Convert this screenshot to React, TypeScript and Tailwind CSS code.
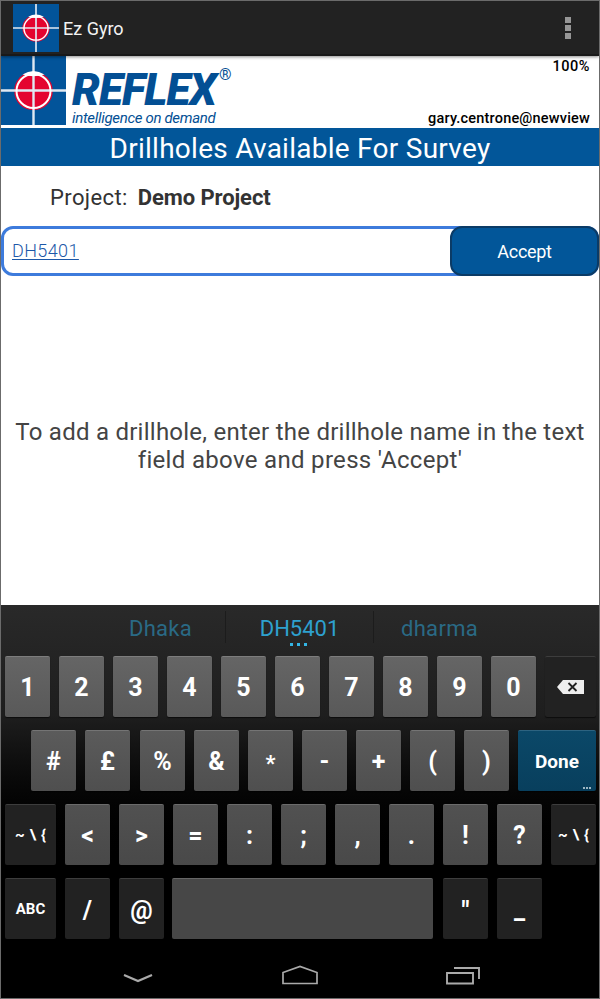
import React from "react";

const faces: Record<string, string> = {
  row1: "bg-linear-to-b from-[#656565] to-[#595959] border-t-[#7d7d7d]",
  row2: "bg-linear-to-b from-[#5b5b5b] to-[#4f4f4f] border-t-[#747474]",
  row3: "bg-linear-to-b from-[#515151] to-[#494949] border-t-[#6b6b6b]",
  space: "bg-[#474747] border-t-[#666666]",
  dark: "bg-[#222222] border-t-[#3d3d3d]",
  done: "bg-linear-to-b from-[#0b4868] to-[#083f5d] border-t-[#2d6380]",
};

function Key({
  face,
  size = "w-[45px]",
  text = "text-[25px]",
  children,
}: {
  face: string;
  size?: string;
  text?: string;
  children?: React.ReactNode;
}) {
  return (
    <div
      className={`relative flex h-[61px] shrink-0 items-center justify-center rounded-[2px] border-t font-bold leading-none text-white shadow-[0_1px_1px_rgba(0,0,0,0.6)] ${faces[face]} ${size} ${text}`}
    >
      {children}
    </div>
  );
}

function Target({ className }: { className: string }) {
  return (
    <svg className={className} viewBox="0 0 65 69" preserveAspectRatio="none">
      <rect width="65" height="69" fill="#02549a" />
      <circle cx="32.5" cy="35" r="19.3" fill="#e4042f" />
      <path d="M32.5 0V69M0 34.5H65" stroke="#dfe8f2" strokeWidth="2.4" fill="none" />
      <circle cx="32.5" cy="35" r="17" fill="none" stroke="#fff" strokeWidth="2" />
      <path d="M21.5 18.5Q32.5 11.5 43.5 18.5Q32.5 22 21.5 18.5Z" fill="#fff" />
    </svg>
  );
}

function MoreSymbols() {
  return (
    <span className="flex items-center gap-[5px] text-[15px]">
      <span>~</span>
      <span>\</span>
      <span>{"{"}</span>
    </span>
  );
}

export default function App() {
  return (
    <div className="flex h-[999px] w-[600px] flex-col overflow-hidden border border-[#6b6b6b] bg-white font-['Roboto',sans-serif]">
      <header className="relative z-10 flex h-[55px] shrink-0 items-center justify-between border-b-2 border-[#191919] bg-[#222222] shadow-[0_1px_3px_rgba(0,0,0,0.45)]">
        <div className="flex items-center pl-3">
          <Target className="h-12 w-[46px]" />
          <span className="ml-1 pt-[2px] text-[18px] leading-none text-[#f3f3f3]">Ez Gyro</span>
        </div>
        <div className="mr-[28px] flex flex-col gap-[2px]">
          <i className="size-[6px] bg-[#969696]" />
          <i className="size-[6px] bg-[#969696]" />
          <i className="size-[6px] bg-[#969696]" />
        </div>
      </header>

      <section className="flex h-[72px] shrink-0 justify-between">
        <div className="flex">
          <Target className="h-[69px] w-[65px]" />
          <div className="flex w-[180px] flex-col pl-[6px] text-[#034f94]">
            <div className="flex h-[52px] items-start pt-[17px]">
              <span className="w-[147px] whitespace-nowrap text-[44px] font-black italic leading-[34px] tracking-[-0.9px]">REFLEX</span>
              <span className="-mt-[6px] text-[16px] leading-[16px]">®</span>
            </div>
            <span className="mt-px whitespace-nowrap text-[15px] italic leading-[18px] tracking-[-0.32px]">intelligence on demand</span>
          </div>
        </div>
        <div className="flex flex-col items-end justify-between pt-[3px] pr-[9px] text-[14.5px] font-medium leading-[16px] text-black">
          <span className="tracking-[0.5px]">100%</span>
          <span className="pb-[1px] tracking-[0.2px]">gary.centrone@newview</span>
        </div>
      </section>

      <h1 className="flex h-[38px] shrink-0 items-center justify-center bg-[#025699] pt-[3px] text-[28px] leading-none tracking-[0.26px] text-white">
        Drillholes Available For Survey
      </h1>

      <div className="flex h-[60px] shrink-0 items-center pt-[3px] pl-[49px] text-[22px] text-[#333]">
        <span className="tracking-[0.4px]">Project:</span>
        <span className="ml-[10px] font-bold tracking-[-0.1px]">Demo Project</span>
      </div>

      <div className="flex h-[50px] shrink-0 rounded-[12px] border-[3px] border-[#3d7bdc] bg-white">
        <div className="flex flex-1 items-center pb-[2px] pl-[8px]">
          <span className="text-[18px] font-light tracking-[0.4px] text-[#1c58a8] underline decoration-1 underline-offset-2">DH5401</span>
        </div>
        <button className="-my-[3px] -mr-[3px] h-[50px] w-[149px] rounded-[12px] border-2 border-[#0b3b66] bg-[#025699] pt-[1px] text-[18px] tracking-[-0.3px] text-white">
          Accept
        </button>
      </div>

      <main className="flex h-[329px] shrink-0 items-center justify-center pt-[11px] text-center text-[24px] leading-[28px] tracking-[0.25px] text-[#444]">
        <p>
          To add a drillhole, enter the drillhole name in the text
          <br />
          <span className="tracking-[0.32px]">field above and press 'Accept'</span>
        </p>
      </main>

      <section className="flex min-h-0 flex-1 flex-col bg-linear-to-b from-[#292929] from-0% via-[#1e1e1e] via-28% to-black to-68%">
        <div className="flex h-[51px] shrink-0 items-start pl-[75px] text-[22px] leading-[48px] text-[#2a6a85]">
          <span className="w-[149px] pl-[20px] text-center tracking-[0.3px]">Dhaka</span>
          <span className="relative mt-[6px] h-8 w-[149px] border-x border-[#1c1c1c] text-center leading-[35px] text-[#2ea1cf]">
            DH5401
            <i className="absolute top-[32px] left-[64px] flex gap-[4px]">
              <b className="size-[3px] bg-[#33b5e5]" />
              <b className="size-[3px] bg-[#33b5e5]" />
              <b className="size-[3px] bg-[#33b5e5]" />
            </i>
          </span>
          <span className="w-[149px] pr-[18px] text-center tracking-[0.3px]">dharma</span>
        </div>

        <div className="flex shrink-0 flex-col gap-[13px] pl-1">
          <div className="flex gap-[9px]">
            {"1234567890".split("").map((c) => (
              <Key key={c} face="row1">{c}</Key>
            ))}
            <Key face="dark" size="w-[51px]">
              <svg className="h-[14px] w-[27px]" viewBox="0 0 27 14">
                <path d="M0 7 6 0H27V14H6Z" fill="#eee" />
                <path d="m11.5 3 8 8m0-8-8 8" stroke="#222" strokeWidth="1.8" />
              </svg>
            </Key>
          </div>
          <div className="flex gap-[9px]">
            <div className="flex gap-[9px] pl-[26px]">
              {"#£%&*-+()".split("").map((c, i) => (
                <div key={c} className={i === 2 ? "ml-px" : ""}>
                  <Key face="row2">
                    <span className={c === "*" ? "pt-[5px] text-[22px]" : "pt-[1px]"}>{c}</span>
                  </Key>
                </div>
              ))}
            </div>
            <Key face="done" size="w-[78px]" text="text-[19px]">
              Done
              <i className="absolute right-[5px] bottom-[2px] flex gap-px">
                <b className="size-[2px] bg-[#9db6c3]" />
                <b className="size-[2px] bg-[#9db6c3]" />
                <b className="size-[2px] bg-[#9db6c3]" />
              </i>
            </Key>
          </div>
          <div className="flex gap-[9px]">
            <Key face="dark" size="w-[51px]"><MoreSymbols /></Key>
            {"<>=:;,.!?".split("").map((c) => (
              <Key key={c} face="row3">{c}</Key>
            ))}
            <Key face="dark"><MoreSymbols /></Key>
          </div>
          <div className="flex gap-[9px]">
            <Key face="dark" size="w-[51px]" text="text-[15px]">ABC</Key>
            <Key face="dark"><span className="pt-[2px]">/</span></Key>
            <Key face="dark"><span className="pt-[2px]">@</span></Key>
            <div className="-ml-px mr-px">
              <Key face="space" size="w-[261px]" />
            </div>
            <Key face="dark"><span className="pt-[2px]">"</span></Key>
            <Key face="dark">_</Key>
          </div>
        </div>

        <nav className="flex flex-1 items-start justify-between pt-[26px] pr-[119px] pl-[122px]">
          <svg className="mt-[9px] h-[9px] w-[30px]" viewBox="0 0 30 9" fill="none" stroke="#aaa" strokeWidth="2.2">
            <path d="M1 1 15 7 29 1" />
          </svg>
          <svg className="h-[20px] w-[36px]" viewBox="0 0 36 20" fill="none" stroke="#aaa" strokeWidth="1.7">
            <path d="M1 18.5V7.5L18 1.5 35 7.5V18.5Z" />
          </svg>
          <svg className="mt-[1px] h-[19px] w-[34px]" viewBox="0 0 34 19" fill="none" stroke="#aaa" strokeWidth="1.9">
            <path d="M1 7H27V17.5H1ZM8 2H33V13" />
          </svg>
        </nav>
      </section>
    </div>
  );
}
